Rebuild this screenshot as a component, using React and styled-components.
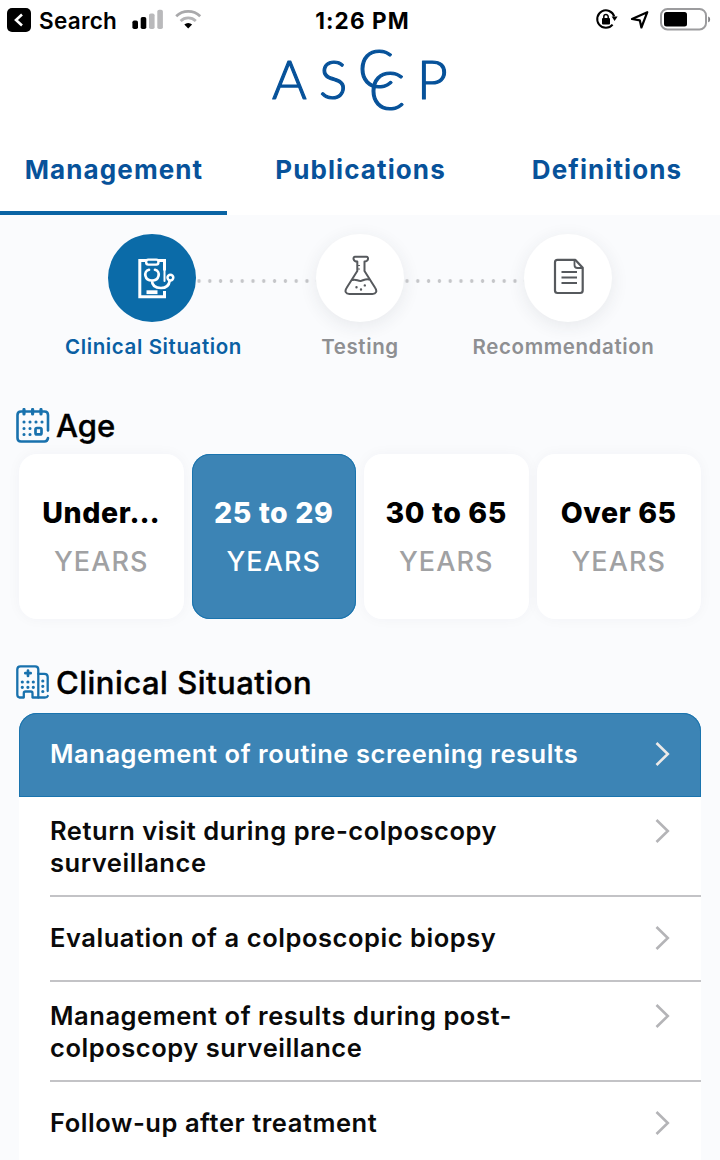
import styled, { createGlobalStyle } from 'styled-components';

const steps = [
  { label: 'Clinical Situation', icon: 'clipboard', active: true, shift: 1.5 },
  { label: 'Testing', icon: 'flask', shift: 0 },
  { label: 'Recommendation', icon: 'document', shift: -4.5 },
];

const ages = [
  { range: 'Under…' },
  { range: '25 to 29', active: true },
  { range: '30 to 65' },
  { range: 'Over 65' },
];

const situations = [
  { text: 'Management of routine screening results', active: true },
  { text: 'Return visit during pre-colposcopy surveillance' },
  { text: 'Evaluation of a colposcopic biopsy' },
  { text: 'Management of results during post-colposcopy surveillance' },
  { text: 'Follow-up after treatment' },
];

const StatusIcons = () => (
  <svg width="120" height="26" viewBox="594 7 120 26" fill="none">
    <path d="M612.6 24.6A8.7 8.7 0 1 1 614.2 16.4" stroke="#000" strokeWidth="2" />
    <path d="M611.6 16.6h6l-3 4.4z" fill="#000" />
    <rect x="602" y="18" width="8" height="6.6" rx="1" fill="#000" />
    <path d="M603.8 18.4v-1.6a2.2 2.2 0 0 1 4.4 0v1.6" stroke="#000" strokeWidth="1.5" />
    <path d="M647.3 12.2 632 19l7.8 1.3 1.6 7.2z" stroke="#000" strokeWidth="2.2" strokeLinejoin="round" />
    <rect x="661" y="9" width="45" height="20.4" rx="6.5" stroke="#9c9c9e" strokeWidth="2" />
    <rect x="664" y="12" width="23" height="14.6" rx="2.5" fill="#000" />
    <path d="M708.2 16.4c2.6.6 2.6 5.2 0 5.8z" fill="#7d7d80" />
  </svg>
);

const SignalIcons = () => (
  <svg width="72" height="24" viewBox="131 8 72 24" fill="none">
    <rect x="132.4" y="20.4" width="5.6" height="8.6" rx="1.8" fill="#000" />
    <rect x="140.7" y="17" width="5.6" height="12" rx="1.8" fill="#000" />
    <rect x="149" y="13.4" width="5.6" height="15.6" rx="1.8" fill="#b9b9bb" />
    <rect x="157.3" y="9.8" width="5.6" height="19.2" rx="1.8" fill="#b9b9bb" />
    <path d="M176.2 16.2a17.4 17.4 0 0 1 24 0" stroke="#a9a9ab" strokeWidth="2.8" />
    <path d="M180.6 20.9a11 11 0 0 1 15.2 0" stroke="#b5b5b7" strokeWidth="2.8" />
    <path d="M184.3 24.6a5.6 5.6 0 0 1 7.8 0l-3.9 4z" fill="#000" />
  </svg>
);

const stepIcons = {
  clipboard: (
    <svg width="48" height="44" viewBox="128 256 48 44" fill="none" stroke="#fff" strokeLinecap="round" strokeLinejoin="round">
      <path d="M164.5 291v5.7h-24.7v-36.2h24.7v10" strokeWidth="3" strokeLinecap="butt" strokeLinejoin="miter" />
      <path d="M164.5 270v11" strokeWidth="2" />
      <rect x="146.2" y="259.6" width="12.2" height="5" rx="2" fill="#0b6ba8" strokeWidth="2.4" />
      <path d="M149 269.8c-6 1.5-4.5 10.7 3 10.7s9-9.2 3-10.7M152 280.5c0 5 3 7.5 9 7.5 5.5 0 8-2 8.6-7" strokeWidth="2.7" />
      <circle cx="170.4" cy="277.6" r="2.9" fill="#0b6ba8" strokeWidth="2.5" />
      <path d="M146.5 292.2h11" strokeWidth="3.8" strokeLinecap="butt" />
    </svg>
  ),
  flask: (
    <svg width="36" height="48" viewBox="342 254 36 48" fill="none" stroke="#56595d" strokeWidth="2" strokeLinecap="round" strokeLinejoin="round">
      <path d="M355 256.8h11.5c2.3 0 2.3 4.7-2 4.7v9.5l10.6 16.7c2.4 3.6 1 6.3-2.7 6.3h-23c-3.7 0-5.1-2.7-2.7-6.3L357.3 271v-9.5c-4.5 0-4.6-4.7-2.3-4.7z" />
      <path d="M352.5 280c3.5-1.5 5.5 1.5 9 .8 3.5-1.3 5-2.2 7.5-1.3" />
      <path d="M357.5 265.5h2M357.5 269h2" strokeWidth="1.2" />
      <path d="M356.5 287.2h.01M361 289.5h.01M364.8 285.4h.01" strokeWidth="2.4" />
    </svg>
  ),
  document: (
    <svg width="32" height="42" viewBox="552 257 32 42" fill="none" stroke="#56595d" strokeWidth="2.2" strokeLinejoin="round">
      <path d="M557.5 259.8h17.7l7.5 8v22.7q0 2.5-2.5 2.5h-22.7q-2.5 0-2.5-2.5v-28.2q0-2.5 2.5-2.5z" />
      <path d="M574.5 260v5q0 3 3 3h5" strokeWidth="1.8" />
      <path d="M561.5 272h15.5M561.5 277.6h15.5M561.5 283h15.5" strokeWidth="2" />
    </svg>
  ),
};

const CalendarIcon = () => (
  <svg width="34" height="36" viewBox="16 407.5 34 36" fill="none" stroke="#1871ad" strokeWidth="2.6" strokeLinecap="round">
    <path d="M48 430v-15.5q0-3.5-3.5-3.5H21q-3.5 0-3.5 3.5v23q0 3.5 3.5 3.5h23.5q3 0 3.5-3.5" />
    <path d="M24 409v4.5M32.6 409v4.5M41 409v4.5" strokeWidth="3.2" />
    <path d="M24 421.5h.01M30 421.5h.01M36 421.5h.01M42 421.5h.01M24 428h.01M30 428h.01M24 434h.01M30 434h.01" strokeWidth="3.1" />
    <rect x="35.5" y="427.5" width="6" height="6.4" rx="1.5" strokeWidth="2.7" />
  </svg>
);

const HospitalIcon = () => (
  <svg width="34" height="36" viewBox="15.7 665 34 36" fill="none" stroke="#1871ad" strokeWidth="2.3" strokeLinecap="round" strokeLinejoin="round">
    <path d="M23.5 697.5H19q-2-.5-2-3v-25q0-3.200 3.200-3.200h14.600q3.200 0 3.200 3.200v28h-5.800v-4.300q0-1.700-1.700-1.700h-5.300q-1.700 0-1.700 1.700z" />
    <path d="M38 673.8h6q3.4 0 3.4 3.2v14M38 697.5h6.5q2.5 0 3-1.5" />
    <path d="M27.7 670.5v5.4M25 673.2h5.4" strokeWidth="2.7" />
    <path d="M22 682h.01M27.6 682h.01M33 682h.01M22 687.3h.01M27.6 687.3h.01M33 687.3h.01M42.5 681h.01M42.5 686.3h.01M42.5 691.5h.01" strokeWidth="3.2" />
  </svg>
);

const Chevron = () => (
  <ChevronSvg width="16" height="26" viewBox="0 0 16 26" fill="none">
    <path d="M1.500 2 12.800 13 1.500 24" stroke="currentColor" strokeWidth="2.6" />
  </ChevronSvg>
);

const App = () => (
  <Screen>
    <GlobalStyle />
    <StatusBar>
      <BackLink>
        <BackBox>
          <svg width="10" height="14" viewBox="0 0 10 14" fill="none">
            <path d="M8 1.5 2 7l6 5.5" stroke="#fff" strokeWidth="2.6" />
          </svg>
        </BackBox>
        <BackText>Search</BackText>
        <SignalIcons />
      </BackLink>
      <Clock>1:26 PM</Clock>
      <StatusIcons />
    </StatusBar>

    <LogoRow>
      <Logo width="190" height="72" viewBox="265 44 190 72">
        <text x="272" y="98.5">A</text>
        <text x="319" y="98.5">S</text>
        <text x="358" y="87.5">C</text>
        <text x="369" y="110">C</text>
        <text x="417" y="98.5">P</text>
      </Logo>
    </LogoRow>

    <Tabs>
      <Tab $active>Management</Tab>
      <Tab>Publications</Tab>
      <Tab>Definitions</Tab>
    </Tabs>

    <Stepper>
      {steps.map((step, i) => (
        <Step key={step.label}>
          <StepTop>
            <Dots $hidden={i === 0} $offset="2.4px" />
            <StepCircle $active={step.active}>{stepIcons[step.icon]}</StepCircle>
            <Dots $hidden={i === steps.length - 1} $offset="-2.4px" />
          </StepTop>
          <StepLabel $active={step.active} $shift={step.shift}>{step.label}</StepLabel>
        </Step>
      ))}
    </Stepper>

    <Heading>
      <CalendarIcon />
      Age
    </Heading>
    <AgeGrid>
      {ages.map((age) => (
        <AgeCard key={age.range} $active={age.active}>
          <AgeRange>{age.range}</AgeRange>
          <AgeUnit $active={age.active}>YEARS</AgeUnit>
        </AgeCard>
      ))}
    </AgeGrid>

    <Heading $second>
      <HospitalIcon />
      Clinical Situation
    </Heading>
    <List>
      {situations.map((item) => (
        <ListItem key={item.text} $active={item.active}>
          <ItemText>{item.text}</ItemText>
          <Chevron />
        </ListItem>
      ))}
    </List>
  </Screen>
);

const GlobalStyle = createGlobalStyle`
  * {
    box-sizing: border-box;
  }

  body {
    margin: 0;
    background: #fafbfd;
    font-family: Inter, "Liberation Sans", sans-serif;
  }

  svg {
    display: block;
    flex-shrink: 0;
  }
`;

const Screen = styled.div`
  width: 720px;
  height: 1160px;
  overflow: hidden;
  background: #fafbfd;
`;

const StatusBar = styled.header`
  display: grid;
  grid-template-columns: 1fr auto 1fr;
  align-items: center;
  height: 40px;
  padding: 0 6px 0 7px;
  background: #fff;

  > svg {
    justify-self: end;
  }
`;

const BackLink = styled.div`
  display: flex;
  align-items: center;
`;

const BackBox = styled.span`
  display: flex;
  align-items: center;
  justify-content: center;
  width: 24px;
  height: 24px;
  border-radius: 5px;
  background: #000;
`;

const BackText = styled.span`
  width: 100px;
  padding-left: 8px;
  font-size: 22.5px;
  font-weight: 600;
  letter-spacing: 0.3px;
`;

const Clock = styled.div`
  padding-left: 4px;
  font-size: 22.5px;
  font-weight: 700;
  letter-spacing: 1.1px;
`;

const LogoRow = styled.div`
  display: flex;
  justify-content: center;
  height: 84px;
  padding-top: 4px;
  background: #fff;
`;

const Logo = styled.svg`
  overflow: visible;
  fill: #07529a;
  stroke: #07529a;
  stroke-width: 1.2px;
  stroke-linejoin: round;
  font-family: Lato, sans-serif;
  font-size: 53px;
  font-weight: 300;
`;

const Tabs = styled.nav`
  display: grid;
  grid-template-columns: 227px 1fr 227px;
  height: 91px;
  background: #fff;
`;

const Tab = styled.div`
  display: flex;
  align-items: center;
  justify-content: center;
  padding: 4px 0 0 1px;
  border-bottom: 4px solid ${(props) => (props.$active ? '#0a64a4' : 'transparent')};
  color: #07529a;
  font-size: 26px;
  font-weight: 700;
  letter-spacing: 1.1px;
`;

const Stepper = styled.div`
  display: grid;
  grid-template-columns: repeat(3, 208px);
  justify-content: center;
  padding-top: 19px;
`;

const Step = styled.div`
  display: flex;
  flex-direction: column;
  align-items: center;
`;

const StepTop = styled.div`
  display: flex;
  align-items: center;
  width: 100%;
`;

const Dots = styled.span`
  flex: 1;
  height: 4px;
  margin-top: 6px;
  visibility: ${(props) => (props.$hidden ? 'hidden' : 'visible')};
  background: radial-gradient(circle, #c5c6c9 1.5px, transparent 2.1px) ${(props) => props.$offset} 0 / 10.8px 4px;
`;

const StepCircle = styled.div`
  display: flex;
  align-items: center;
  justify-content: center;
  width: 88px;
  height: 88px;
  border-radius: 50%;
  background: ${(props) => (props.$active ? '#0b6ba8' : '#fff')};
  box-shadow: ${(props) => (props.$active ? 'none' : '0 4px 18px rgba(40, 50, 70, 0.09)')};
`;

const StepLabel = styled.div`
  margin: 12px 0 0 ${(props) => props.$shift * 2}px;
  color: ${(props) => (props.$active ? '#0a5fa3' : '#8e8f92')};
  font-size: 20.5px;
  font-weight: 600;
  line-height: 26px;
  letter-spacing: 0.6px;
  white-space: nowrap;
`;

const Heading = styled.h2`
  display: flex;
  align-items: center;
  gap: 6px;
  height: 44px;
  margin: ${(props) => (props.$second ? '42px' : '44px')} 0 0 16px;
  font-size: 31px;
  font-weight: 500;
  line-height: 44px;
  letter-spacing: ${(props) => (props.$second ? '0.5px' : '0')};
  -webkit-text-stroke: 0.4px #000;
`;

const AgeGrid = styled.div`
  display: grid;
  grid-template-columns: repeat(4, 1fr);
  gap: 8px;
  padding: 6px 19px 0;
`;

const AgeCard = styled.div`
  display: flex;
  flex-direction: column;
  align-items: center;
  height: 165px;
  padding-top: 41px;
  border-radius: 18px;
  background: ${(props) => (props.$active ? '#3c84b5' : '#fff')};
  box-shadow: ${(props) => (props.$active ? 'inset 0 0 0 1px #1a74ae' : '0 0 14px rgba(40, 50, 70, 0.04)')};
  color: ${(props) => (props.$active ? '#fff' : '#000')};
`;

const AgeRange = styled.div`
  font-size: 28.5px;
  font-weight: 800;
  line-height: 36px;
  letter-spacing: 0.6px;
`;

const AgeUnit = styled.div`
  margin-top: 13px;
  color: ${(props) => (props.$active ? '#fff' : '#a0a1a3')};
  font-size: 27px;
  font-weight: 500;
  line-height: 36px;
  letter-spacing: 1.1px;
`;

const List = styled.div`
  margin: 8px 19px 0;
  border-radius: 18px 18px 0 0;
  background: #fff;
`;

const ItemText = styled.div`
  max-width: 560px;
`;

const ChevronSvg = styled.svg`
  margin-top: 3px;
`;

const ListItem = styled.div`
  display: flex;
  justify-content: space-between;
  margin-left: ${(props) => (props.$active ? 0 : '31px')};
  padding: ${(props) => (props.$active ? '25px 30px 27px 31px' : '18px 30px 16px 0')};
  border-radius: ${(props) => (props.$active ? '18px 18px 0 0' : 0)};
  background: ${(props) => (props.$active ? '#3c84b5' : 'none')};
  box-shadow: ${(props) => (props.$active ? 'inset 0 0 0 1px #1a74ae' : 'none')};
  border-bottom: ${(props) => (props.$active ? 'none' : '2px solid #c3c3c6')};
  color: ${(props) => (props.$active ? '#fff' : '#0a0a0a')};
  font-size: 25.5px;
  font-weight: 600;
  line-height: 32px;
  letter-spacing: 0.55px;

  ${ChevronSvg} {
    color: ${(props) => (props.$active ? '#eceae8' : '#b4b4b7')};
  }

  &:nth-child(odd):not(:first-child) {
    padding-top: 25px;
    padding-bottom: 26px;
  }
`;

export default App;
